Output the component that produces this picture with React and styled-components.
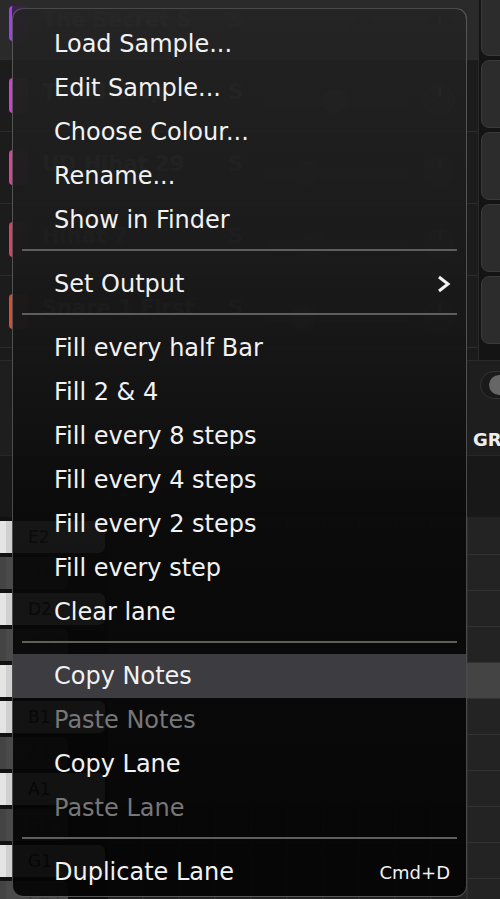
import styled, { createGlobalStyle } from "styled-components";

const GlobalStyle = createGlobalStyle`
  html, body {
    margin: 0;
    padding: 0;
    background: #1a1a1a;
    overflow: hidden;
  }
  * { box-sizing: border-box; }
`;

const tracks = [
  { name: "The Secret S", colour: "#a33df0", dark: "#3a2346", knob: 60 },
  { name: "TM88 Clap", colour: "#d63ad8", dark: "#3b2140", knob: 40 },
  { name: "UD Hihat 29", colour: "#e0409a", dark: "#3b2132", knob: 20 },
  { name: "Hihat 7", colour: "#e0405e", dark: "#3b2128", knob: 25 },
  { name: "Snare 1 First", colour: "#e04a2e", dark: "#3b2220", knob: 18 },
];

const keys = [
  { note: "E2", black: false },
  { note: "D#2", black: true },
  { note: "D2", black: false },
  { note: "C#2", black: true },
  { note: "C2", black: false },
  { note: "B1", black: false },
  { note: "A#1", black: true },
  { note: "A1", black: false },
  { note: "G#1", black: true },
  { note: "G1", black: false },
  { note: "F#1", black: true },
];

const menu = [
  { label: "Load Sample..." },
  { label: "Edit Sample..." },
  { label: "Choose Colour..." },
  { label: "Rename..." },
  { label: "Show in Finder" },
  { sep: true },
  { label: "Set Output", sub: true },
  { sep: true },
  { label: "Fill every half Bar" },
  { label: "Fill 2 & 4" },
  { label: "Fill every 8 steps" },
  { label: "Fill every 4 steps" },
  { label: "Fill every 2 steps" },
  { label: "Fill every step" },
  { label: "Clear lane" },
  { sep: true },
  { label: "Copy Notes", active: true },
  { label: "Paste Notes", disabled: true },
  { label: "Copy Lane" },
  { label: "Paste Lane", disabled: true },
  { sep: true },
  { label: "Duplicate Lane", shortcut: "Cmd+D" },
];

const Chevron = () => (
  <svg width="16" height="18" viewBox="0 0 16 18">
    <path
      d="M3 2 L12 9 L3 16"
      fill="none"
      stroke="#f2f2f2"
      strokeWidth="3"
      strokeLinejoin="miter"
    />
  </svg>
);

const App = () => {
  return (
    <>
      <GlobalStyle />
      <Screen>
        <Backdrop>
          <TopSection>
            <TrackList>
              {tracks.map((t, i) => (
                <TrackRow key={t.name} $first={i === 0}>
                  <Swatch $colour={t.colour} $dark={t.dark} />
                  <TrackName>{t.name}</TrackName>
                  <SoloLetter>S</SoloLetter>
                  <Slider>
                    <SliderThumb style={{ left: `${t.knob}%` }} />
                  </Slider>
                  <Knob />
                </TrackRow>
              ))}
            </TrackList>
            <SideButtons>
              {tracks.map((t) => (
                <SideButton key={t.name} />
              ))}
            </SideButtons>
          </TopSection>

          <Toolbar>
            <Pill>
              <PillDot />
            </Pill>
            <GroupLabel>GR</GroupLabel>
          </Toolbar>

          <Ruler>
            <RulerMark>1</RulerMark>
          </Ruler>

          <PianoRoll>
            <Keys>
              {keys.map((k) => (
                <Key key={k.note} $black={k.black}>
                  {k.note}
                </Key>
              ))}
            </Keys>
            <Grid>
              {keys.map((k) => (
                <GridRow key={k.note} $lit={k.note === "C2"} />
              ))}
            </Grid>
          </PianoRoll>
        </Backdrop>

        <Menu>
          {menu.map((m, i) =>
            m.sep ? (
              <Separator key={`sep-${i}`} />
            ) : (
              <MenuItem key={m.label} $active={m.active} $disabled={m.disabled}>
                <span>{m.label}</span>
                {m.sub && <Chevron />}
                {m.shortcut && <Shortcut>{m.shortcut}</Shortcut>}
              </MenuItem>
            )
          )}
        </Menu>
      </Screen>
    </>
  );
};

const Screen = styled.div`
  position: relative;
  width: 500px;
  height: 899px;
  overflow: hidden;
  font-family: "DejaVu Sans", "Liberation Sans", sans-serif;
`;

const Backdrop = styled.div`
  display: flex;
  flex-direction: column;
  height: 100%;
  background: #1b1b1b;
`;

const TopSection = styled.div`
  display: grid;
  grid-template-columns: 479px 1fr;
  height: 360px;
  overflow: hidden;
`;

const TrackList = styled.div`
  display: flex;
  flex-direction: column;
  margin-top: -12px;
  border-right: 1px solid #2a2a2a;
`;

const TrackRow = styled.div`
  display: flex;
  align-items: flex-start;
  height: 72px;
  flex: none;
  padding: 18px 0 0 9px;
  background: ${({ $first }) => ($first ? "#2a2a2a" : "#1c1c1c")};
  border-bottom: 1px solid #2c2c2c;
`;

const Swatch = styled.div`
  width: 19px;
  height: 35px;
  border-radius: 4px;
  background: ${({ $dark }) => $dark};
  border-left: 3px solid ${({ $colour }) => $colour};
`;

const TrackName = styled.div`
  width: 186px;
  margin: 2px 0 0 14px;
  font-size: 21px;
  font-weight: bold;
  color: #3c3c3c;
  white-space: nowrap;
  overflow: hidden;
`;

const SoloLetter = styled.div`
  width: 36px;
  margin-top: 2px;
  font-size: 21px;
  font-weight: bold;
  color: #363636;
`;

const Slider = styled.div`
  position: relative;
  width: 145px;
  height: 10px;
  margin-top: 18px;
  border-radius: 5px;
  background: #242424;
`;

const SliderThumb = styled.div`
  position: absolute;
  top: -8px;
  width: 26px;
  height: 26px;
  border-radius: 50%;
  background: #282828;
  border: 1px solid #222;
`;

const Knob = styled.div`
  position: relative;
  width: 32px;
  height: 32px;
  margin: 6px 0 0 14px;
  border-radius: 50%;
  background: #252525;
  border: 1px solid #2b2b2b;

  &::after {
    content: "";
    position: absolute;
    left: 14px;
    top: 2px;
    width: 3px;
    height: 10px;
    background: #3e3e3e;
  }
`;

const SideButtons = styled.div`
  display: flex;
  flex-direction: column;
  gap: 4px;
  margin-top: -12px;
  padding-left: 2px;
  background: #141414;
`;

const SideButton = styled.div`
  height: 68px;
  width: 40px;
  flex: none;
  border-radius: 8px;
  background: #2c2c2c;
  border: 1px solid #3a3a3a;
`;

const Toolbar = styled.div`
  position: relative;
  height: 95px;
  background: #1e1e1e;
  border-top: 1px solid #2a2a2a;
`;

const Pill = styled.div`
  position: absolute;
  left: 480px;
  top: 10px;
  width: 60px;
  height: 28px;
  border-radius: 14px;
  background: #1a1a1a;
  border: 1px solid #333;
  padding: 3px 8px;
`;

const PillDot = styled.div`
  width: 20px;
  height: 20px;
  border-radius: 50%;
  background: #666;
`;

const GroupLabel = styled.div`
  position: absolute;
  left: 473px;
  top: 68px;
  font-size: 18px;
  font-weight: bold;
  color: #eeeeee;
`;

const Ruler = styled.div`
  position: relative;
  height: 62px;
  background: #181818;
  border-top: 1px solid #262626;
`;

const RulerMark = styled.div`
  position: absolute;
  left: 110px;
  top: 26px;
  padding-left: 8px;
  border-left: 1px solid #2c2c2c;
  font-size: 15px;
  color: #303030;
`;

const PianoRoll = styled.div`
  display: grid;
  grid-template-columns: 108px 1fr;
  flex: 1;
  overflow: hidden;
`;

const Keys = styled.div`
  display: flex;
  flex-direction: column;
  gap: 4px;
  padding-top: 4px;
  background: #111;
`;

const Key = styled.div`
  height: 32px;
  flex: none;
  width: ${({ $black }) => ($black ? "68px" : "105px")};
  border-radius: 0 6px 6px 0;
  padding: 6px 0 0 28px;
  font-size: 17px;
  color: ${({ $black }) => ($black ? "#3c3c3c" : "#222")};
  background: ${({ $black }) => ($black ? "#4a4a4a" : "#d0d0d0")};
  box-shadow: inset 6px 0 0 ${({ $black }) => ($black ? "#444" : "#e4e4e4")};
`;

const Grid = styled.div`
  display: flex;
  flex-direction: column;
  padding-top: 2px;
  background-color: #232323;
  background-image: repeating-linear-gradient(
    90deg,
    transparent 0,
    transparent 34px,
    #2e2e2e 34px,
    #2e2e2e 36px
  );
`;

const GridRow = styled.div`
  height: 36px;
  flex: none;
  border-bottom: 1px solid #333;
  background: ${({ $lit }) => ($lit ? "rgba(90,90,90,0.6)" : "transparent")};
`;

const Menu = styled.div`
  position: absolute;
  left: 12px;
  top: 8px;
  width: 455px;
  height: 889px;
  display: flex;
  flex-direction: column;
  padding-top: 13px;
  border: 1px solid rgba(130, 130, 130, 0.55);
  border-radius: 11px;
  background: linear-gradient(
    180deg,
    rgba(36, 36, 36, 0.86) 0%,
    rgba(24, 24, 24, 0.9) 35%,
    rgba(9, 9, 9, 0.94) 60%,
    rgba(5, 5, 5, 0.95) 100%
  );
  overflow: hidden;
`;

const MenuItem = styled.div`
  display: flex;
  align-items: center;
  justify-content: space-between;
  height: 44px;
  flex: none;
  padding: 0 14px 0 41px;
  font-size: 24px;
  color: ${({ $disabled }) => ($disabled ? "#777777" : "#f2f2f2")};
  background: ${({ $active }) => ($active ? "#3c3c41" : "transparent")};
`;

const Separator = styled.div`
  flex: none;
  height: 2px;
  margin: 7px 9px 11px 9px;
  background: #5e5e5e;
`;

const Shortcut = styled.span`
  font-size: 18px;
  color: #f2f2f2;
  padding-right: 2px;
`;

export default App;
